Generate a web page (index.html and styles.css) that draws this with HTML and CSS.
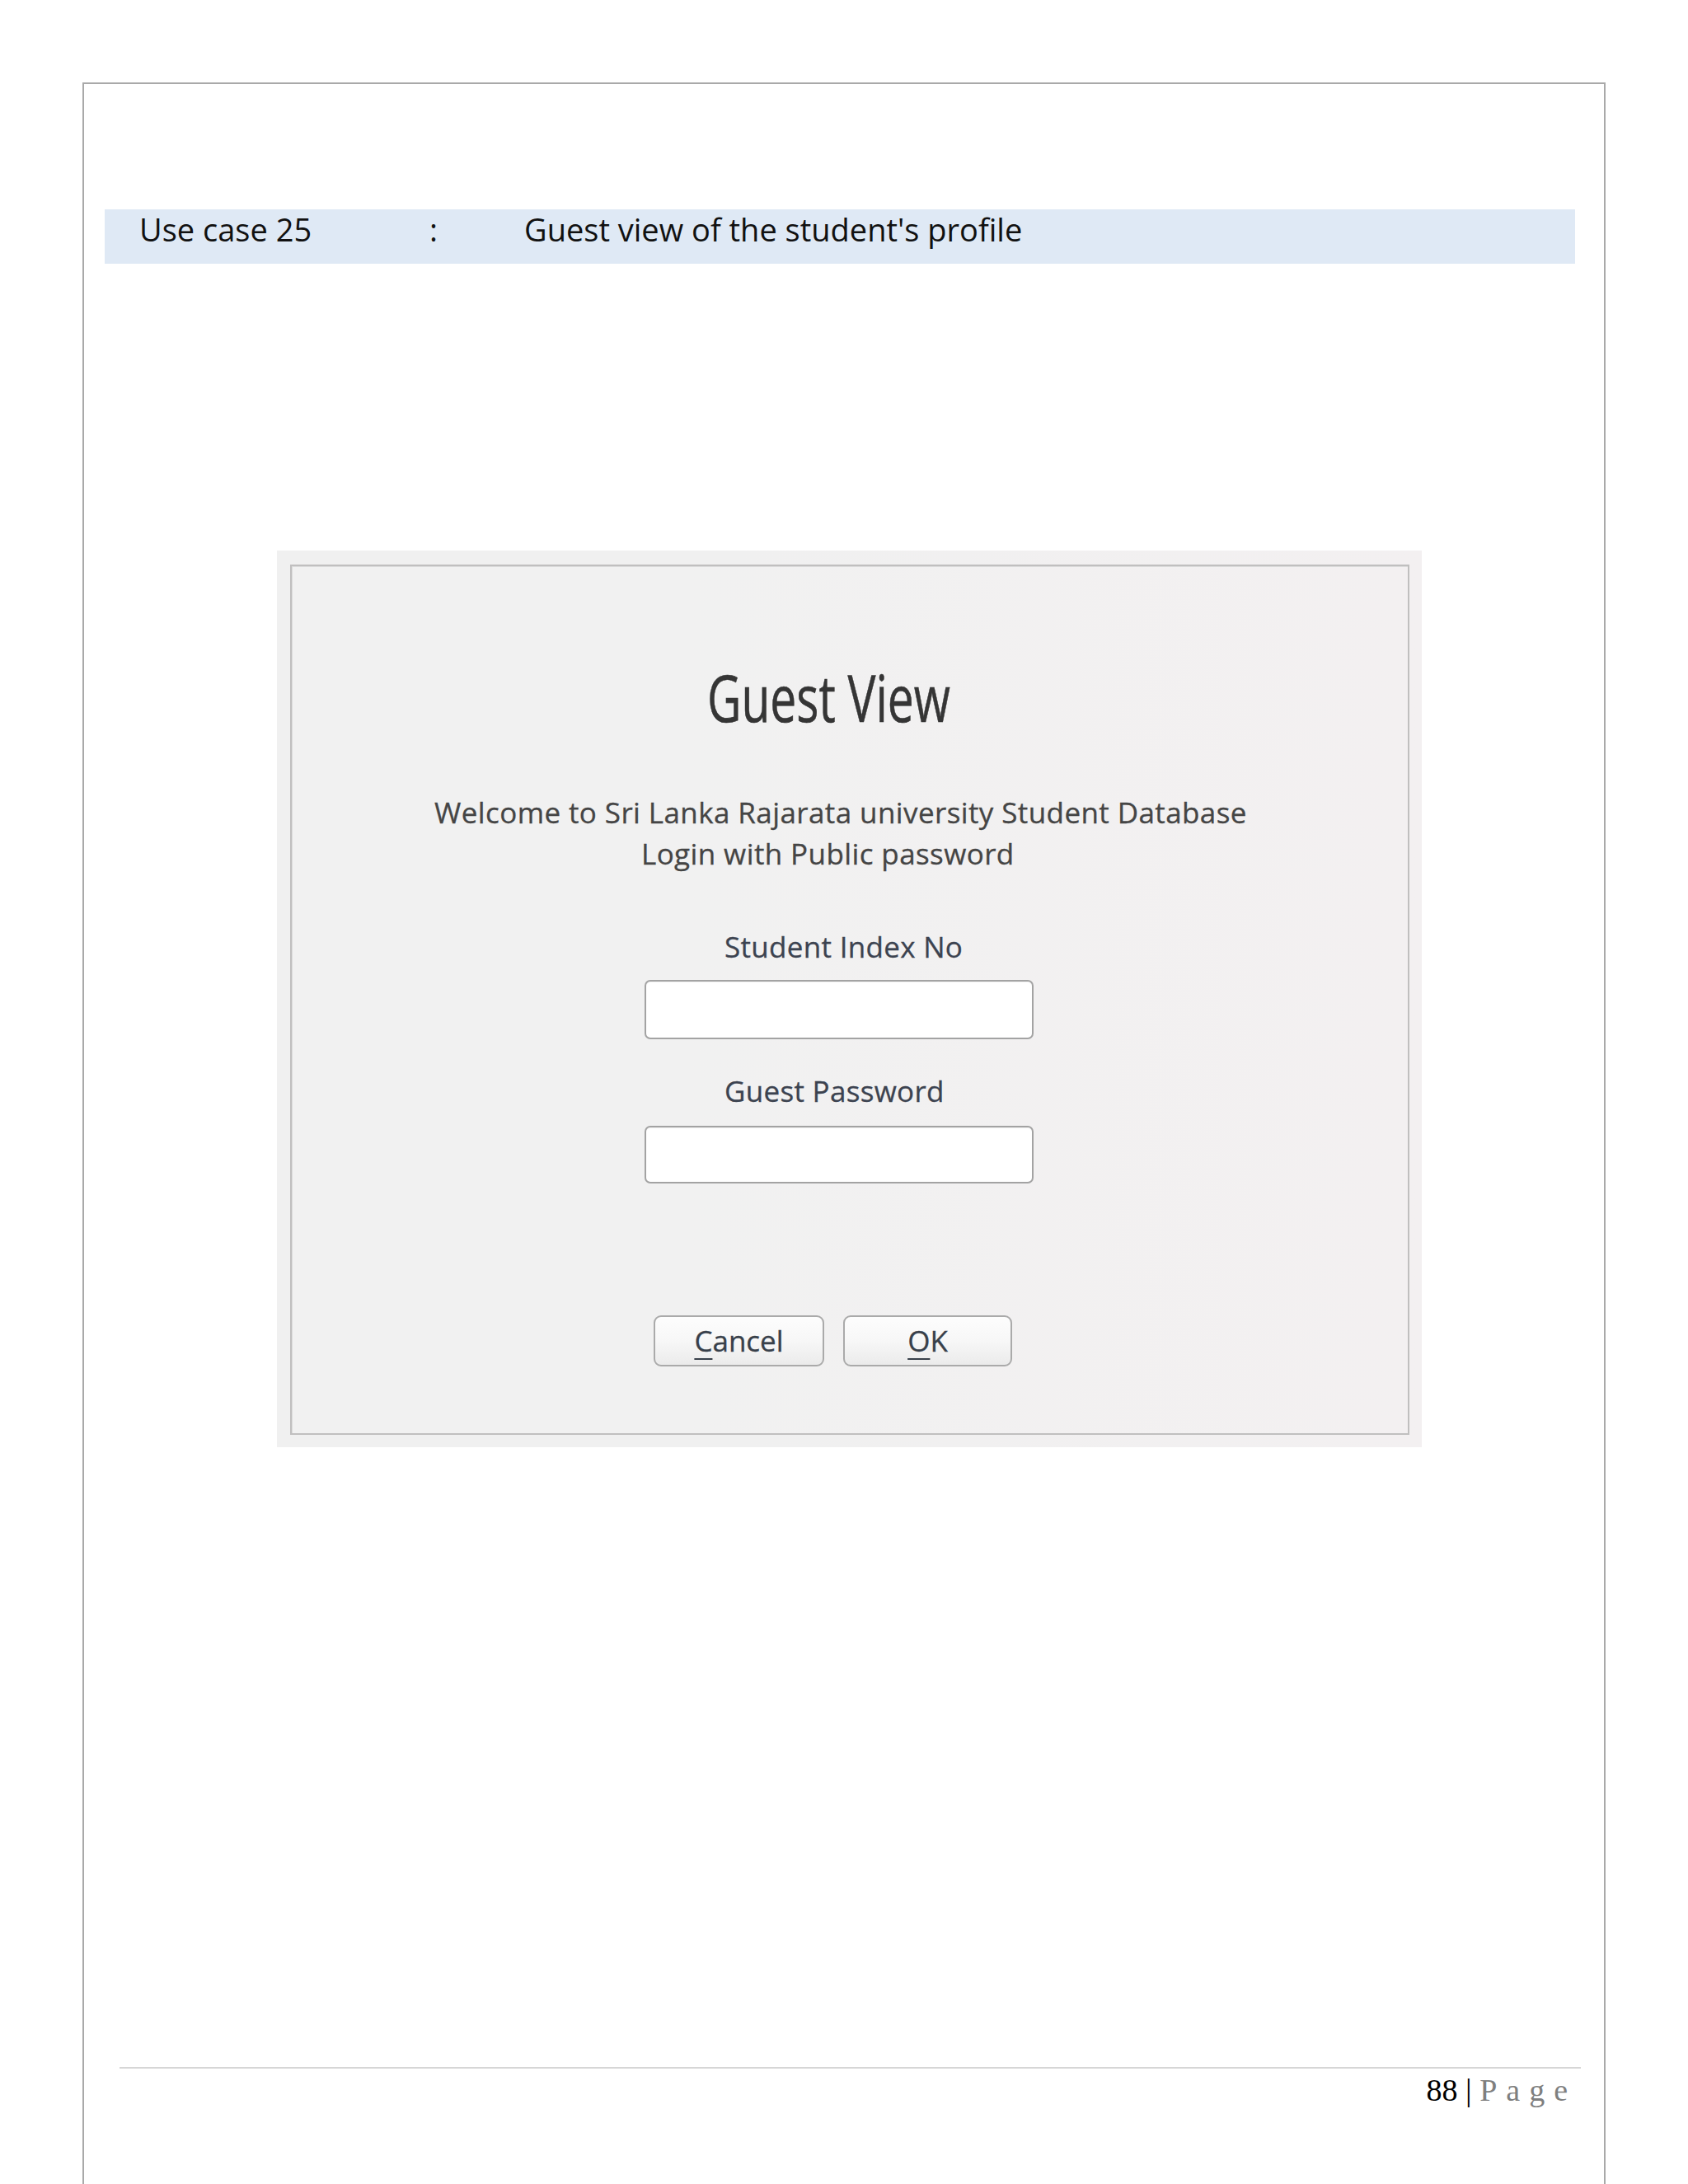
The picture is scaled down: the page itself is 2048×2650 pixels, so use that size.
FILE: index.html
```html
<!DOCTYPE html>
<html lang="en">
<head>
<meta charset="utf-8">
<title>Use case 25 - Guest view</title>
<link rel="stylesheet" href="styles.css">
</head>
<body>
<div class="page">
  <div class="case-band">
    <span class="case-id">Use case 25</span>
    <span class="case-sep">:</span>
    <span class="case-title">Guest view of the student's profile</span>
  </div>

  <div class="dialog">
    <div class="frame">
      <h1 class="title"><span class="title-text">Guest View</span></h1>
      <p class="welcome welcome-1">Welcome to Sri Lanka Rajarata university Student Database</p>
      <p class="welcome welcome-2">Login with Public password</p>

      <label class="field-label label-1" for="idx">Student Index No</label>
      <input class="field field-1" id="idx" type="text">

      <label class="field-label label-2" for="pwd">Guest Password</label>
      <input class="field field-2" id="pwd" type="password">

      <div class="buttons">
        <button class="btn btn-cancel" type="button"><span class="mnemonic">C</span>ancel</button>
        <button class="btn btn-ok" type="button"><span class="mnemonic">O</span>K</button>
      </div>
    </div>
  </div>

  <div class="footer">
    <span class="page-num">88</span> <span class="bar">|</span> <span class="page-word">Page</span>
  </div>
</div>
</body>
</html>
```

FILE: styles.css
```css
html, body {
  margin: 0;
  padding: 0;
  background: #ffffff;
}
body {
  width: 2048px;
  height: 2650px;
  overflow: hidden;
  font-family: "Open Sans", "Noto Sans", sans-serif;
}

.page {
  margin: 100px 0 0 100px;
  width: 1844px;
  min-height: 2600px;
  border: 2px solid #a9a9a9;
  border-bottom: none;
  background: #ffffff;
}

/* header band */
.case-band {
  margin: 152px 0 0 25px;
  width: 1784px;
  height: 66px;
  box-sizing: border-box;
  padding-left: 42px;
  background: #dfe9f5;
  display: grid;
  grid-template-columns: 352px 115px auto;
  align-items: start;
  font-size: 38px;
  line-height: 48px;
  color: #111111;
}

/* dialog screenshot */
.dialog {
  margin: 348px 0 0 234px;
  width: 1389px;
  height: 1088px;
  box-sizing: border-box;
  padding: 17px 15px 15px 16px;
  background: linear-gradient(90deg, #f0f0f0 40%, #f3f0f1);
}
.frame {
  width: 1358px;
  height: 1056px;
  box-sizing: border-box;
  border: 2px solid #c0bfbf;
  box-shadow: inset 1px 1px 0 #dcdcdc;
  background: linear-gradient(90deg, #f1f1f1 35%, #f3f0f1);
  color: #444444;
}

.title {
  margin: 109px 0 0 504px;
  font-size: 78px;
  line-height: 100px;
  font-weight: 400;
  color: #353535;
  height: 100px;
}
.title-text {
  display: inline-block;
  transform: scaleX(0.73);
  transform-origin: 0 0;
  white-space: nowrap;
  -webkit-text-stroke: 0.6px #353535;
}

.welcome {
  margin: 0;
  font-size: 35px;
  line-height: 50px;
  letter-spacing: 0.4px;
  color: #454545;
  white-space: nowrap;
  -webkit-text-stroke: 0.3px #454545;
}
.welcome-1 { margin: 65px 0 0 173px; }
.welcome-2 { margin: 0 0 0 424px; }

.field-label {
  display: block;
  font-size: 35px;
  line-height: 50px;
  letter-spacing: 0.3px;
  color: #3c4350;
  margin-left: 525px;
  white-space: nowrap;
  -webkit-text-stroke: 0.3px #3c4350;
}
.label-1 { margin-top: 63px; }
.label-2 { margin-top: 38px; }

.field {
  display: block;
  margin: 0 0 0 428px;
  width: 472px;
  box-sizing: border-box;
  border: 2px solid #a3a3a3;
  border-radius: 7px;
  background: #ffffff;
  box-shadow: inset 0 1px 1px rgba(0,0,0,0.06);
  padding: 0;
  outline: none;
}
.field-1 { margin-top: 15px; height: 72px; }
.field-2 { margin-top: 17px; height: 70px; }

.buttons {
  margin: 160px 0 0 439px;
  display: flex;
  gap: 23px;
}
.btn {
  height: 62px;
  box-sizing: border-box;
  border: 2px solid #aaaaaa;
  border-radius: 9px;
  background: linear-gradient(#fdfdfd, #f7f7f7 50%, #ebebeb);
  font-family: "Open Sans", "Noto Sans", sans-serif;
  font-size: 35px;
  line-height: 58px;
  color: #38404a;
  padding: 0;
  text-align: center;
  -webkit-text-stroke: 0.3px #38404a;
}
.btn-cancel { width: 207px; }
.btn-ok { width: 205px; }
.mnemonic {
  text-decoration: underline;
  text-decoration-thickness: 2px;
  text-underline-offset: 8px;
}

/* footer */
.footer {
  margin: 752px 0 0 43px;
  width: 1773px;
  box-sizing: border-box;
  border-top: 2px solid #d6d6d6;
  padding: 4px 5px 0 0;
  text-align: right;
  font-family: "Liberation Serif", "Times New Roman", serif;
  font-size: 38px;
  line-height: 44px;
  color: #000000;
}
.page-word {
  color: #7f7f7f;
  letter-spacing: 11px;
}
```
